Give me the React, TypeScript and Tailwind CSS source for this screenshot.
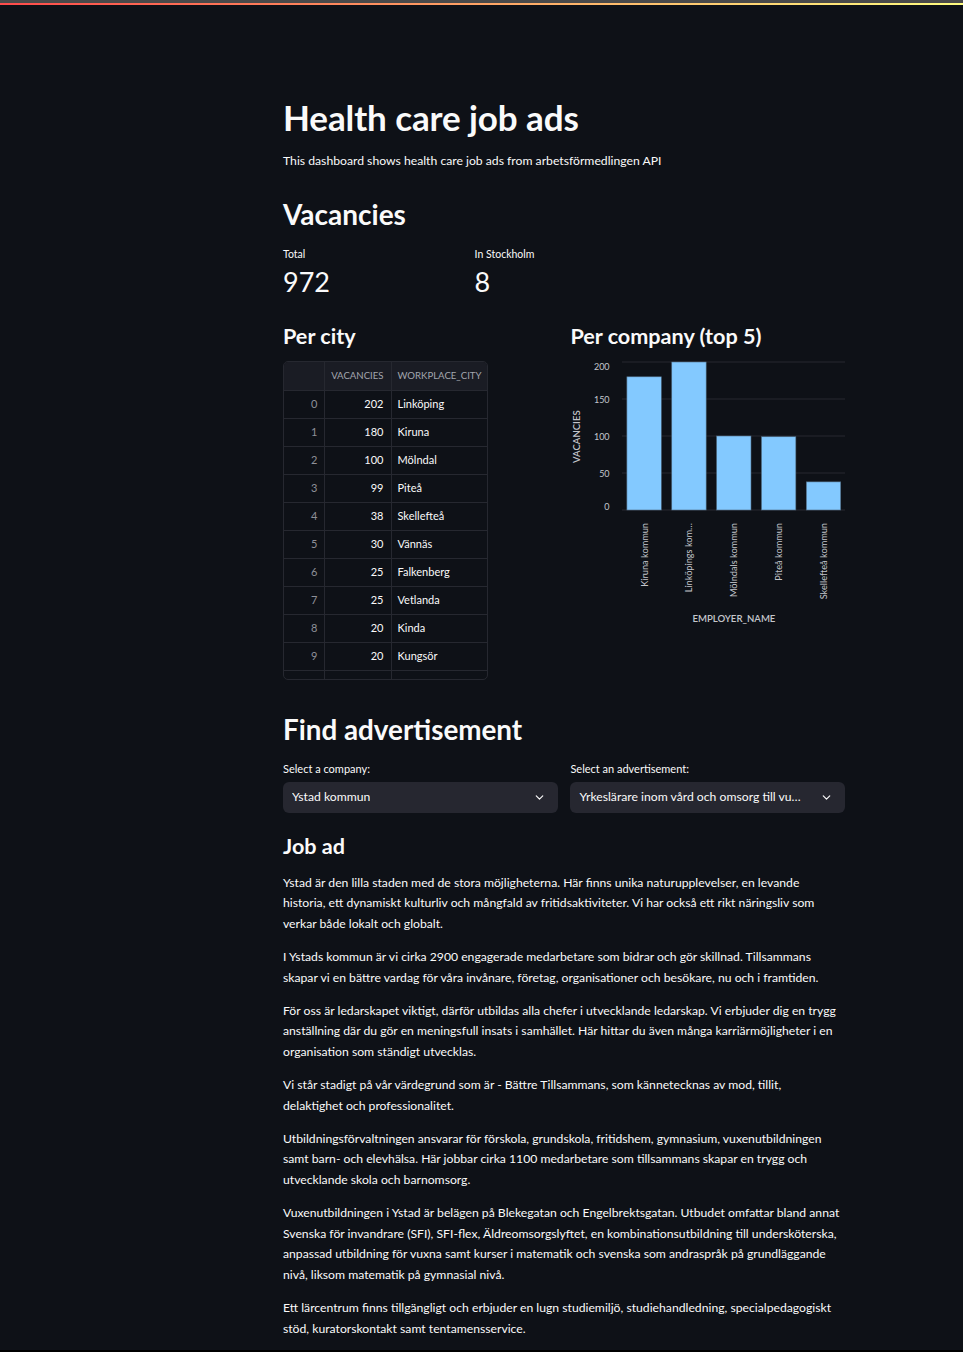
import React from "react";
import { ChevronDown } from "lucide-react";

const cityRows: [number, string][] = [
  [202, "Linköping"],
  [180, "Kiruna"],
  [100, "Mölndal"],
  [99, "Piteå"],
  [38, "Skellefteå"],
  [30, "Vännäs"],
  [25, "Falkenberg"],
  [25, "Vetlanda"],
  [20, "Kinda"],
  [20, "Kungsör"],
];

const companies: [string, number][] = [
  ["Kiruna kommun", 180],
  ["Linköpings kom…", 200],
  ["Mölndals kommun", 100],
  ["Piteå kommun", 99],
  ["Skellefteå kommun", 38],
];

const paragraphs: string[][] = [
  [
    "Ystad är den lilla staden med de stora möjligheterna. Här finns unika naturupplevelser, en levande",
    "historia, ett dynamiskt kulturliv och mångfald av fritidsaktiviteter. Vi har också ett rikt näringsliv som",
    "verkar både lokalt och globalt.",
  ],
  [
    "I Ystads kommun är vi cirka 2900 engagerade medarbetare som bidrar och gör skillnad. Tillsammans",
    "skapar vi en bättre vardag för våra invånare, företag, organisationer och besökare, nu och i framtiden.",
  ],
  [
    "För oss är ledarskapet viktigt, därför utbildas alla chefer i utvecklande ledarskap. Vi erbjuder dig en trygg",
    "anställning där du gör en meningsfull insats i samhället. Här hittar du även många karriärmöjligheter i en",
    "organisation som ständigt utvecklas.",
  ],
  [
    "Vi står stadigt på vår värdegrund som är - Bättre Tillsammans, som kännetecknas av mod, tillit,",
    "delaktighet och professionalitet.",
  ],
  [
    "Utbildningsförvaltningen ansvarar för förskola, grundskola, fritidshem, gymnasium, vuxenutbildningen",
    "samt barn- och elevhälsa. Här jobbar cirka 1100 medarbetare som tillsammans skapar en trygg och",
    "utvecklande skola och barnomsorg.",
  ],
  [
    "Vuxenutbildningen i Ystad är belägen på Blekegatan och Engelbrektsgatan. Utbudet omfattar bland annat",
    "Svenska för invandrare (SFI), SFI-flex, Äldreomsorgslyftet, en kombinationsutbildning till undersköterska,",
    "anpassad utbildning för vuxna samt kurser i matematik och svenska som andraspråk på grundläggande",
    "nivå, liksom matematik på gymnasial nivå.",
  ],
  [
    "Ett lärcentrum finns tillgängligt och erbjuder en lugn studiemiljö, studiehandledning, specialpedagogiskt",
    "stöd, kuratorskontakt samt tentamensservice.",
  ],
];

function CityTable() {
  return (
    <div className="mt-[11px] h-[319px] w-[205px] overflow-hidden rounded-[5px] border border-[#262830]">
      <table className="w-full table-fixed border-collapse text-[11px] tabular-nums">
        <colgroup>
          <col className="w-[40px]" />
          <col className="w-[67px]" />
          <col className="w-[96px]" />
        </colgroup>
        <thead>
          <tr className="h-[28px] bg-[#1a1c24] text-[9.6px] text-[#a3a6ae]">
            <th className="border-b border-r border-[#262830] font-normal"></th>
            <th className="border-b border-r border-[#262830] pr-[7px] text-right font-normal">VACANCIES</th>
            <th className="whitespace-nowrap border-b border-[#262830] pl-[6px] text-left font-normal">WORKPLACE_CITY</th>
          </tr>
        </thead>
        <tbody>
          {cityRows.map(([v, c], i) => (
            <tr key={i} className="h-[28px]">
              <td className="border-b border-r border-[#262830] pr-[6px] text-right text-[#8e9098]">{i}</td>
              <td className="border-b border-r border-[#262830] pr-[7px] text-right text-[#fafafa]">{v}</td>
              <td className="border-b border-[#262830] pl-[6px] text-left text-[#fafafa]">{c}</td>
            </tr>
          ))}
          <tr className="h-[28px]">
            <td className="border-r border-[#262830]"></td>
            <td className="border-r border-[#262830]"></td>
            <td></td>
          </tr>
        </tbody>
      </table>
    </div>
  );
}

function CompanyChart() {
  const base = 155;
  const k = 0.74;
  const grid = [200, 150, 100, 50, 0];
  return (
    <svg width="275" height="275" viewBox="0 0 275 275" className="mt-[5px] block">
      {grid.map((g) => (
        <line key={g} x1="52" x2="275" y1={base - g * k} y2={base - g * k} stroke="#262831" strokeWidth="1" />
      ))}
      {grid.map((g, i) => (
        <text
          key={"t" + g}
          x="39.6"
          y={i === 0 ? 11.7 : i === 4 ? 151.7 : base - g * k}
          textAnchor="end"
          dominantBaseline="central"
          fontSize="9"
          fill="#c4c6cc"
        >
          {g}
        </text>
      ))}
      <text
        x="0"
        y="0"
        transform="translate(6.5 81.7) rotate(-90)"
        textAnchor="middle"
        dominantBaseline="central"
        fontSize="9.6"
        fontWeight="600"
        fill="#c4c6cc"
      >
        VACANCIES
      </text>
      {companies.map(([name, v], i) => {
        const x = 56.9 + i * 44.85;
        const h = v * k;
        const cx = x + 17.2;
        return (
          <g key={name}>
            <rect x={x} y={base - h} width="34.4" height={h} fill="#83c9ff" stroke="#4f6a80" strokeWidth="0.6" />
            <text
              x="0"
              y="0"
              transform={`translate(${cx} 168) rotate(-90)`}
              textAnchor="end"
              dominantBaseline="central"
              fontSize="9.2"
              fill="#c4c6cc"
            >
              {name}
            </text>
          </g>
        );
      })}
      <text x="163.9" y="263.3" textAnchor="middle" dominantBaseline="central" fontSize="9.6" fontWeight="600" fill="#c4c6cc">
        EMPLOYER_NAME
      </text>
    </svg>
  );
}

function SelectBox({ label, value }: { label: string; value: string }) {
  return (
    <div>
      <div className="text-[11px] leading-[16px] text-[#fafafa]">{label}</div>
      <div className="mt-[5px] flex h-[31px] items-center justify-between rounded-[6px] bg-[#262730] pl-[9px] pr-[12px] text-[12.2px]">
        <span className="truncate">{value}</span>
        <ChevronDown size={13} strokeWidth={2.2} className="ml-[8px] shrink-0 text-[#fafafa]" />
      </div>
    </div>
  );
}

export default function App() {
  return (
    <div className="relative h-[1352px] overflow-hidden bg-[#0e1117] font-[family-name:Lato,'Noto_Sans',sans-serif] text-[#fafafa]">
      <div className="h-[3px] bg-[#4a4a4a]" />
      <div className="h-[2px] bg-[linear-gradient(90deg,#ff4b4b,#fffd80)]" />
      <main className="ml-[283px] w-[562px]">
        <h1 className="mt-[91px] text-[35px] leading-[42px] font-bold tracking-[-0.1px]">Health care job ads</h1>
        <p className="mt-[12.75px] text-[12.2px] leading-[20.5px]">
          This dashboard shows health care job ads from arbetsförmedlingen API
        </p>
        <h2 className="mt-[24.75px] text-[28px] leading-[36px] font-bold">Vacancies</h2>
        <div className="mt-[14px] grid grid-cols-3 gap-x-[12.8px]">
          <div>
            <div className="text-[10.5px] leading-[16px]">Total</div>
            <div className="mt-[2px] text-[27px] leading-[36px]">972</div>
          </div>
          <div>
            <div className="text-[10.5px] leading-[16px]">In Stockholm</div>
            <div className="mt-[2px] text-[27px] leading-[36px]">8</div>
          </div>
          <div />
        </div>
        <div className="mt-[22px] grid grid-cols-2 gap-x-[12.8px]">
          <div>
            <h3 className="text-[21.6px] leading-[28px] font-bold">Per city</h3>
            <CityTable />
          </div>
          <div>
            <h3 className="text-[21.6px] leading-[28px] font-bold">Per company (top 5)</h3>
            <CompanyChart />
          </div>
        </div>
        <h2 className="mt-[32px] text-[27.8px] leading-[36px] font-bold">Find advertisement</h2>
        <div className="mt-[13px] grid grid-cols-2 gap-x-[12.8px]">
          <SelectBox label="Select a company:" value="Ystad kommun" />
          <SelectBox label="Select an advertisement:" value="Yrkeslärare inom vård och omsorg till vu…" />
        </div>
        <h3 className="mt-[19px] text-[21.6px] leading-[28px] font-bold">Job ad</h3>
        <div className="mt-[12.75px]">
          {paragraphs.map((lines, i) => (
            <p key={i} className="mb-[12.8px] text-[12.2px] leading-[20.5px]">
              {lines.map((l, j) => (
                <span key={j} className="block whitespace-nowrap">
                  {l}
                </span>
              ))}
            </p>
          ))}
        </div>
      </main>
      <div className="absolute bottom-0 left-0 right-0 h-[2px] bg-black" />
    </div>
  );
}
